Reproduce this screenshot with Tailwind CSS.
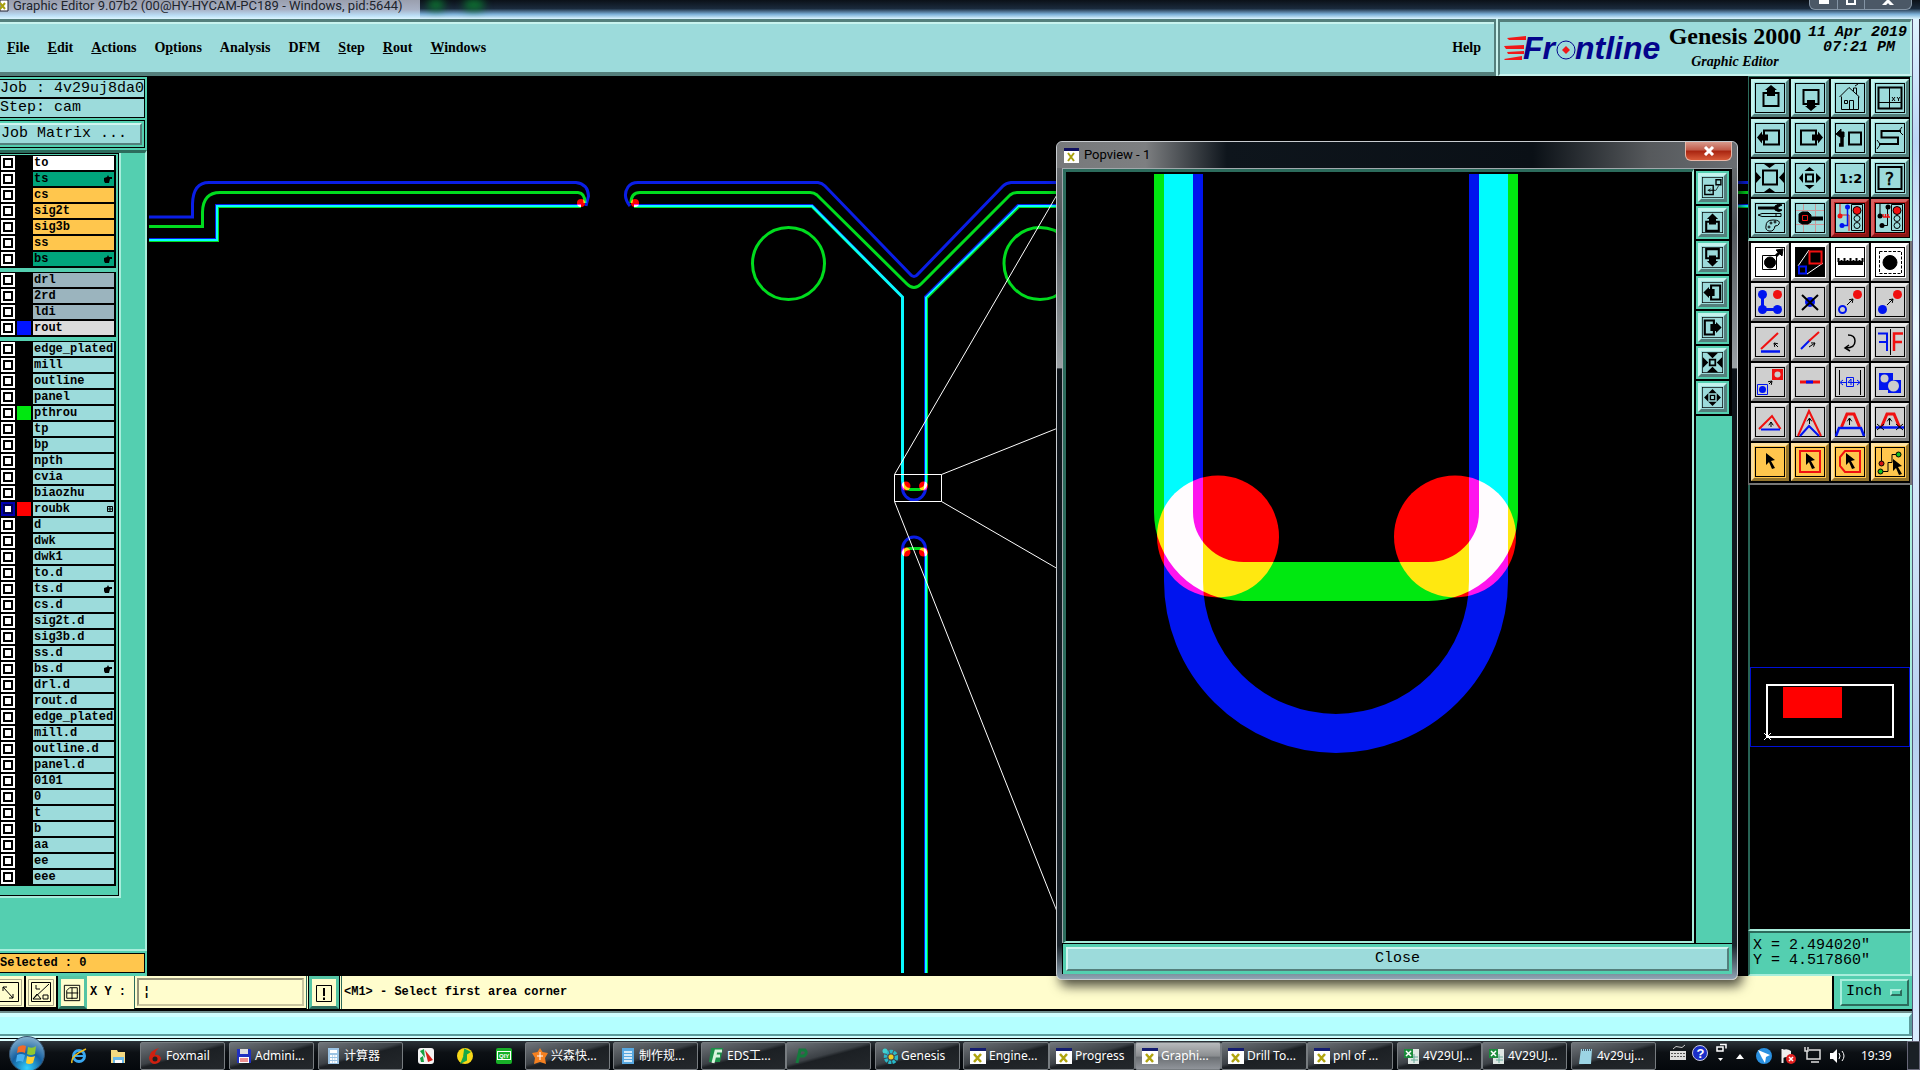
<!DOCTYPE html>
<html lang="en">
<head>
<meta charset="utf-8">
<title>Graphic Editor</title>
<script src="https://cdn.jsdelivr.net/npm/@tailwindcss/browser@4"></script>
</head>
<body class="bg-black">
<div class="relative flex h-screen flex-col overflow-hidden bg-black font-['Liberation_Mono',monospace] text-black">

  <!-- window title -->
  <header class="flex h-[19px] shrink-0 items-start justify-between">
    <div class="relative flex h-full flex-1 items-start bg-[linear-gradient(180deg,#0b1118_0%,#1a2a3c_45%,#7cb0d8_75%,#dcf6ff_100%)]">
      <div class="flex h-full w-[420px] items-start gap-1 bg-[linear-gradient(180deg,#9a9fae_0%,#a7b0c4_50%,#b9dcf4_80%,#dcf6ff_100%)]">
        <svg class="h-[12px] w-[9px]" viewBox="0 0 9 12"><path d="M0 0h8v11H0z" fill="#fff" stroke="#223"/><path d="M0 3l5 6M5 3L0 9" stroke="#a8a010" stroke-width="2"/></svg>
        <h1 class="font-[Roboto,sans-serif] text-[13px] leading-[11px] whitespace-nowrap text-[#20242c]">Graphic Editor 9.07b2 (00@HY-HYCAM-PC189 - Windows, pid:5644)</h1>
      </div>
      <span class="ml-2 h-[10px] w-4 rounded-full bg-[#0c7a30] blur-xs"></span><span class="ml-5 h-[10px] w-5 rounded-full bg-[#0c7a30] blur-xs"></span>
    </div>
    <div class="absolute top-0 right-2 flex h-[10px] rounded-b-md border border-t-0 border-[#8494a4] bg-[#4b5866]">
      <button aria-label="Minimize" class="flex w-[28px] items-start justify-center border-r border-[#8494a4]"><span class="h-[4px] w-[10px] bg-white"></span></button>
      <button aria-label="Maximize" class="flex w-[27px] items-start justify-center border-r border-[#8494a4]"><span class="h-[5px] w-[10px] border-2 border-t-0 border-white"></span></button>
      <button aria-label="Close window" class="flex w-[46px] items-start justify-center"><svg width="12" height="5" viewBox="0 0 12 5"><path d="M1 6l5-5 5 5" stroke="#fff" stroke-width="3" fill="none"/></svg></button>
    </div>
  </header>

  <div class="flex min-h-0 flex-1">
    <div class="flex min-w-0 flex-1 flex-col">
      <!-- menu bar and brand -->
      <div class="flex h-[57px] shrink-0 bg-[#9cdbdb] font-['Liberation_Serif',serif] text-[14px] font-bold">
        <nav class="flex flex-1 items-center border-t-[3px] border-r-2 border-b-4 border-t-[#547f7c] border-r-[#547f7c] border-b-[#547f7c] pr-[13px] pl-[7px] shadow-[inset_0_2px_0_#c8f3ee,2px_0_0_#c8f3ee]">
          <div class="flex gap-[18px]">
            <button><u>F</u>ile</button><button><u>E</u>dit</button><button><u>A</u>ctions</button><button>O<u>p</u>tions</button><button>Analysis</button><button>DFM</button><button><u>S</u>tep</button><button><u>R</u>out</button><button><u>W</u>indows</button>
          </div>
          <button class="ml-auto">Help</button>
        </nav>
        <div class="ml-[2px] flex w-[414px] items-start border-t-[3px] border-r-2 border-b-2 border-l-2 border-t-[#547f7c] border-r-[#c8f3ee] border-b-[#c8f3ee] border-l-[#547f7c] pl-[4px]">
          <svg class="mt-[8px] h-[40px] w-[162px] shrink-0" viewBox="0 -2 162 40" role="img" aria-label="Frontline">
            <path d="M3 6l19-2v4H5zM0 14l20-1v4H2zM3 20l17-1v3H4zM0 27l18-3v4H1z" fill="#f01818"/>
            <text x="19" y="27" font-family="Liberation Sans" font-size="32" font-weight="bold" font-style="italic" fill="#04048c">Fr</text>
            <circle cx="62" cy="18" r="9" fill="#9cdbdb" stroke="#04048c"/><path d="M62 14l4 4-4 4-4-4z" fill="#f01818"/>
            <text x="71" y="27" font-family="Liberation Sans" font-size="32" font-weight="bold" font-style="italic" fill="#04048c">ntline</text>
          </svg>
          <div class="flex w-[138px] flex-col items-center">
            <span class="text-[24px] leading-[28px] whitespace-nowrap">Genesis 2000</span>
            <span class="text-[14px] leading-[24px] italic">Graphic Editor</span>
          </div>
          <div class="mt-[3px] ml-[4px] text-right font-['Liberation_Mono',monospace] text-[15px] leading-[15px] whitespace-nowrap italic">
            <div>11 Apr 2019</div><div class="pr-[12px]">07:21 PM</div>
          </div>
        </div>
      </div>

      <main class="flex min-h-0 flex-1">
        <!-- layer panel -->
        <aside class="flex w-[147px] shrink-0 flex-col overflow-hidden border-t border-black bg-[#54cfb0] pb-[3px]">
          <div class="mt-[2px] mr-[2px] border border-l-0 border-black bg-[#9cdbdb] text-[15px] leading-[17px] whitespace-nowrap">Job : 4v29uj8da0</div>
          <div class="mr-[2px] border border-l-0 border-black bg-[#9cdbdb] text-[15px] leading-[18px] whitespace-nowrap">Step: cam</div>
          <div class="mt-[2px] mr-[2px] border border-l-0 border-black py-[2px] pr-[2px]">
            <button class="block h-[22px] w-full border-2 border-l-0 border-t-[#d0f5f0] border-r-[#547f7c] border-b-[#547f7c] bg-[#9cdbdb] pl-[1px] text-left text-[15px] leading-[18px]">Job Matrix ...</button>
          </div>
          <div class="mt-[2px] flex flex-1 flex-col border-t-[3px] border-r-2 border-b-2 border-t-[#2c6b5c] border-r-[#a8eedc] border-b-[#a8eedc]">
            <div class="w-[121px] border-r-2 border-b-2 border-[#a8eedc]">
              <div id="layers" class="flex flex-col gap-[4px] border-t border-r border-b border-black pt-[1px] pr-[2px] pb-[9px]"></div>
            </div>
          </div>
          <div class="mt-[2px] mr-[2px] h-[20px] border border-l-0 border-black bg-[#ffc64d] text-[12px] leading-[18px] font-bold">Selected : 0</div>
        </aside>

        <!-- drawing -->
        <section class="relative min-w-0 flex-1 bg-black" aria-label="Drawing">
          <svg class="absolute inset-0 isolate h-full w-full" fill="none">
            <g transform="translate(-147 -76)">
              <g class="mix-blend-plus-lighter" stroke="#00dc1e" stroke-width="3">
                <path d="M149 226.500H202.500V212Q203 192.500 220 192.500H578Q585 193 585 203"/>
                <path d="M631 203Q631 192.500 640 192.500H810Q814 192.500 817 195L907 284Q914 291 921 284L1010 195Q1013 192.500 1017 192.500H1748"/>
                <path d="M149 240.500H217.500V206.500H581M634 206.500H812L902.500 297V480Q903 489.500 910 489.500H920Q926.500 489 926.500 480V298L1019 206.500H1748"/>
                <path d="M902.500 973V556Q903 548.500 910 548.500H920Q926.500 549 926.500 556V973"/>
                <circle cx="788.500" cy="263.500" r="36"/><circle cx="1040" cy="263.500" r="36"/>
              </g>
              <g class="mix-blend-plus-lighter" stroke="#0a1ee6" stroke-width="3">
                <path d="M149 217H192.500V204Q193 182.500 209 182.500H576Q588 184 588.500 196L586 206"/>
                <path d="M630 206Q622 196 628 187Q631 182.500 638 182.500H818Q822 183 825 186L910 274Q914 279 918 274L1003 186Q1006 183 1011 182.500H1748"/>
                <path d="M149 239.500H216.500V205.500H581M634 205.500H812L902.500 297V488A11.500 12 0 0 0 925.500 488V297L1018 205.500H1748"/>
                <path d="M902.500 973V549A11.500 12 0 0 1 925.500 549V973"/>
              </g>
              <g class="mix-blend-plus-lighter" fill="#f00">
                <circle cx="581" cy="203" r="4"/><circle cx="635" cy="203" r="4"/><circle cx="906" cy="486" r="4.500"/><circle cx="923.500" cy="486" r="4.500"/><circle cx="906" cy="552" r="4.500"/><circle cx="923.500" cy="552" r="4.500"/>
              </g>
              <g stroke="#fff"><path d="M894.500 474.500H941.500V501.500H894.500ZM894.500 474.500L1058 193M941.500 474.500L1058 428M941.500 501.500L1058 569M894.500 501.500L1058 914"/></g>
            </g>
          </svg>
        </section>

        <!-- tool column -->
        <aside class="flex w-[164px] shrink-0 flex-col">
          <div id="viewTools" class="grid grid-cols-[repeat(4,38px)] gap-[2px] border-t border-r-2 border-b-[3px] border-l border-t-[#2c6b5c] border-r-[#a8eedc] border-b-[#a8eedc] border-l-[#2c6b5c] bg-black p-[2px] pb-[1px]"></div>
          <div id="editTools" class="grid grid-cols-[repeat(4,38px)] gap-[2px] border-r-2 border-b-2 border-l border-[#777] bg-black p-[2px]"></div>
          <div class="relative flex flex-1 flex-col border-r-2 border-b-2 border-l-2 border-r-[#a8eedc] border-b-[#a8eedc] border-l-[#2c6b5c] bg-black pt-[182px]">
            <svg class="h-[80px] w-full" viewBox="0 0 160 80" fill="none"><rect x=".5" y=".5" width="159" height="79" stroke="#0010d8"/><rect x="17" y="18" width="126" height="52" stroke="#fff" stroke-width="2"/><path d="M33 20H92V51H33z" fill="#f00"/><path d="M14 66l7 7M21 66l-7 7" stroke="#fff"/></svg>
          </div>
          <div class="h-[45px] border-t-2 border-r-2 border-b-2 border-l-2 border-t-[#2c6b5c] border-r-[#a8eedc] border-b-[#a8eedc] border-l-[#2c6b5c] bg-[#54cfb0] pt-[5px] pl-[3px] text-[15px] leading-[15px] whitespace-nowrap"><div>X = 2.494020"</div><div>Y = 4.517860"</div></div>
        </aside>
      </main>

      <!-- command line -->
      <div class="flex h-[33px] shrink-0 bg-[#fffdcd] text-[12px] font-bold">
        <button aria-label="Resize" class="w-[26px] border-r-2 border-b-2 border-black"><svg class="h-[30px] w-[24px]" viewBox="0 0 24 30" fill="none" stroke="#000"><path d="M-1 2.500h22.500v26H-1" stroke="#aaa78a"/><path d="M-1 5.500h19.500v19H-1M3 10l10 11M3 10v4M3 10h4M13 21v-4M13 21h-4"/></svg></button>
        <button aria-label="Angle snap" class="w-[32px] border-r-2 border-b-2 border-black"><svg class="h-[30px] w-[30px]" viewBox="0 0 30 30" fill="none" stroke="#000"><path d="M2.500 2.500h25v26h-25z" stroke="#aaa78a"/><path d="M5.500 5.500h19v19h-19zM7 22L23 7M7 22h8l-4-5z"/><path d="M10 8v4h4M17 18h5v4h-5z"/></svg></button>
        <button aria-label="Grid" class="w-[29px] border-[3px] border-[#54c4a4] border-b-[#2c6b5c]"><svg class="size-[23px]" viewBox="0 0 24 24" fill="none" stroke="#000"><path d="M3.500 4.500h16v16h-16zM6 12.500h12M11.500 7v12M6 10l3-3h8v11H6z"/></svg></button>
        <label for="xy" class="w-[47px] pl-[3px] leading-[32px] whitespace-pre">X Y :</label>
        <div class="w-[173px] border-x border-b border-x-[#2c6b5c] border-b-black p-[2px]"><input id="xy" class="block h-[28px] w-full border-2 border-t-[#98957a] border-r-[#c9c6a0] border-b-[#c9c6a0] border-l-[#98957a] bg-[#fffdcd] px-1 outline-none placeholder:text-black" placeholder="¦"></div>
        <button aria-label="Messages" class="ml-[2px] w-[30px] border-[3px] border-[#54c4a4] border-b-[#2c6b5c] outline outline-black"><svg class="size-[24px]" viewBox="0 0 24 24" fill="none" stroke="#000"><path d="M4.500 4.500h15v16h-15z"/><path d="M12 7v8M12 16.500v2.500" stroke-width="2"/></svg></button>
        <output class="ml-[2px] flex-1 border-l border-[#2c6b5c] pl-[2px] leading-[32px]">&lt;M1&gt; - Select first area corner</output>
        <div class="w-[80px] border-l-2 border-black bg-[#54cfb0] py-[3px] pr-[3px] pl-[6px]">
          <label class="relative block"><span class="sr-only">Units</span>
            <select class="block h-[27px] w-full appearance-none border-2 border-t-[#a8eedc] border-r-[#2c6b5c] border-b-[#2c6b5c] border-l-[#a8eedc] bg-[#54cfb0] pl-[4px] text-[15px] font-normal"><option>Inch</option><option>mm</option></select>
            <span class="absolute top-[10px] right-[7px] h-[7px] w-[12px] border-2 border-t-[#a8eedc] border-r-[#2c6b5c] border-b-[#2c6b5c] border-l-[#a8eedc]"></span></label>
        </div>
      </div>
      <div class="h-[32px] shrink-0 border-t-2 border-b-2 border-t-black border-b-[#dff]">
        <div class="h-full border-t-2 border-b border-t-[#6e8c8a] border-b-black"><div class="h-[23px] border-t-4 border-r-[3px] border-b-2 border-t-[#d0ffff] border-r-[#5c9c9c] border-b-[#5c9c9c] bg-[#b4ffff]"></div><div class="h-[2px] bg-[#d0ffff]"></div></div>
      </div>
    </div>
    <div class="w-2 shrink-0 border-r border-l border-r-[#334] border-l-[#557] bg-[linear-gradient(180deg,#dff3ff_0%,#bcd6f6_12%,#eaf8ff_30%,#b6d0f0_70%,#d9ecff_100%)]"></div>
  </div>

  <!-- taskbar -->
  <footer class="flex h-[29px] shrink-0 items-center bg-[linear-gradient(180deg,#2c3238_0%,#0c1014_40%,#04080c_100%)] font-['Noto_Sans','Noto_Sans_CJK_SC',sans-serif] text-[12px] text-white">
    <button aria-label="Start" class="ml-[8px] w-[38px] self-end"><svg class="block h-[34px] w-[38px]" viewBox="0 0 38 34"><defs><radialGradient id="orb" cx=".5" cy=".9" r=".9"><stop offset="0" stop-color="#30d0ff"/><stop offset=".5" stop-color="#1560a0"/><stop offset="1" stop-color="#8ab4d0"/></radialGradient></defs><circle cx="19" cy="18" r="17.500" fill="url(#orb)" stroke="#37536e"/><path d="M10 11q4-3 8-1l-1 7q-4-2-8 0z" fill="#f06a28"/><path d="M20 11q5 2 8-1l-1 8q-4 2-8 0z" fill="#90c830"/><path d="M9 19q4-2 8 0l-2 7q-3-2-7 0z" fill="#48b0f0"/><path d="M19 20q4 2 8 0l-2 7q-4 2-7 0z" fill="#ffd030"/></svg></button>
    <div id="tasks" class="flex h-[28px] flex-1 items-center"></div>
    <div class="flex h-full items-center">
      <svg class="h-[28px] w-[198px]" viewBox="0 0 198 28" fill="none">
        <path d="M10 7q3-4 6-2t6-2" stroke="#ccc"/><path d="M7 9h16v9H7z" fill="#ddd"/><path d="M8 11.500h14M8 14.500h14" stroke="#555" stroke-dasharray="2 1"/>
        <circle cx="37" cy="11" r="7.500" fill="#1a2ec8" stroke="#ccd"/><text x="33.500" y="16" font-family="Liberation Sans" font-weight="bold" font-size="13" fill="#fff">?</text>
        <path d="M54 5h6v4h-6zM57 2.500h6v4" stroke="#fff" stroke-width="1.500"/><path d="M55 16h5l-2.500 3z" fill="#fff"/><path d="M73 17h8l-4-5z" fill="#fff"/>
        <circle cx="101" cy="14" r="8" fill="#2a90e0"/><path d="M95 8l12 5-4 2-1 6-3-5z" fill="#fff"/>
        <path d="M119.500 7v14" stroke="#eee" stroke-width="2"/><path d="M120 8q4-2 8 1v7q-4-2-8 0z" fill="#eee"/><circle cx="128" cy="17" r="5" fill="#e02020"/><path d="M126 15l4 4M130 15l-4 4" stroke="#fff" stroke-width="1.500"/>
        <path d="M146 8h11v9h-13v-8M148 20h8M142 5v4h3v-4" stroke="#ddd" stroke-width="1.500"/>
        <path d="M167 11h3l4-4v14l-4-4h-3z" fill="#fff"/><path d="M176 11q2 3 0 6M179 9q4 5 0 10" stroke="#fff"/>
      </svg>
      <time class="w-[46px] whitespace-nowrap">19:39</time>
      <button aria-label="Show desktop" class="h-full w-[13px] border border-[#667] bg-[#1a2026]"></button>
    </div>
  </footer>

  <!-- zoomed view window -->
  <section class="absolute top-[141px] left-[1056px] flex h-[839px] w-[682px] flex-col rounded-t-md rounded-b-md border border-[#c8ccd0] bg-[linear-gradient(180deg,#6e7276_0%,#50565a_10%,#9aa0a4_27%,#0c1218_27.100%,#1a242c_96%,#8fa4b4_100%)] px-[5px] pb-[5px] shadow-[4px_6px_12px_rgba(0,0,0,0.7)]" aria-label="Popview">
    <div class="-mx-[5px] flex h-[26px] shrink-0 items-center rounded-t-md bg-[linear-gradient(90deg,#77797b_0%,#7d7f81_13%,#0e151c_25%,#0a1016_70%,#56595c_87%,#6a6e72_100%)] pr-[5px] pl-[7px]">
      <svg class="mr-[5px] h-[15px] w-[15px]" viewBox="0 0 15 15"><path d="M0 0h15v15H0z" fill="#fff"/><path d="M0 0h15v3H0z" fill="#101060"/><path d="M4 5l6 8M10 5l-6 8" stroke="#a8a010" stroke-width="2"/></svg>
      <h2 class="font-[Roboto,sans-serif] text-[13px] text-black">Popview - 1</h2>
      <button aria-label="Close popview" class="mb-auto ml-auto flex h-[19px] w-[47px] items-center justify-center rounded-b-md border border-t-0 border-[#e8b8a8] bg-[linear-gradient(180deg,#d89a8c_0%,#c05a48_45%,#a82410_50%,#d85a38_100%)]"><svg width="12" height="10" viewBox="0 0 12 10"><path d="M2 1l8 8M10 1l-8 8" stroke="#fff" stroke-width="3"/></svg></button>
    </div>
    <div class="flex min-h-0 flex-1 border-t border-l border-[#a0a8ac] bg-black">
      <div class="relative flex-1 border-t-[3px] border-r-2 border-b-2 border-l-[3px] border-t-[#2c6b5c] border-r-[#a8eedc] border-b-[#a8eedc] border-l-[#2c6b5c] bg-black">
        <svg class="absolute inset-0 isolate h-full w-full" fill="none">
          <g transform="translate(-1066 -172)">
            <path class="mix-blend-plus-lighter" d="M1173.500 174V512A70 69.500 0 0 0 1243.500 581.500H1428.500A70 69.500 0 0 0 1498.500 512V174" stroke="#00e810" stroke-width="39"/>
            <path class="mix-blend-plus-lighter" d="M1183.500 174V581A152.500 152.500 0 0 0 1488.500 581V174" stroke="#0014ee" stroke-width="39"/>
            <g class="mix-blend-plus-lighter" fill="#f00"><circle cx="1218" cy="536.500" r="61"/><circle cx="1455" cy="536.500" r="61"/></g>
          </g>
        </svg>
      </div>
      <div class="flex w-[38px] flex-col border-l-2 border-black bg-[#54cfb0]"><div id="popTools" class="flex flex-col gap-[2px] bg-black py-[2px] pr-[3px]"></div></div>
    </div>
    <div class="shrink-0 border-t border-l border-black bg-[#54cfb0] p-[3px]"><button class="block h-[24px] w-full border-2 border-t-[#d0f5f0] border-r-[#547f7c] border-b-[#547f7c] border-l-[#d0f5f0] bg-[#9cdbdb] text-[15px] leading-[20px]">Close</button></div>
  </section>
</div>

<script>
// ---- layers: name, row colour, swatch, marker ----
const P = 'bg-[#9cdbdb]', O = 'bg-[#ffc64d]', G = 'bg-[#00a47c]', S = 'bg-[#9bb4be]';
const groups = [
  [['to','bg-white'],['ts',G,,'hand'],['cs',O],['sig2t',O],['sig3b',O],['ss',O],['bs',G,,'hand']],
  [['drl',S],['2rd',S],['ldi',S],['rout','bg-[#dcdcdc]','bg-[#0014ff]']],
  ['edge_plated','mill','outline','panel','pthrou','tp','bp','npth','cvia','biaozhu','roubk','d','dwk','dwk1','to.d','ts.d','cs.d','sig2t.d','sig3b.d','ss.d','bs.d','drl.d','rout.d','edge_plated','mill.d','outline.d','panel.d','0101','0','t','b','aa','ee','eee']
    .map(n => [n, P, {pthrou:'bg-[#00e810]', roubk:'bg-[#ff0000]'}[n], {roubk:'grid','ts.d':'hand','bs.d':'hand'}[n]])
];
const marks = {
  hand: '<svg class="mr-[2px] size-[8px]" viewBox="0 0 8 8"><path d="M0 3l3-1 1-2 1 2h3v2H6l-1 4H1L0 6z"/></svg>',
  grid: '<svg class="mr-[1px] size-[6px]" viewBox="0 0 6 6" fill="none" stroke="#000"><path d="M.5.5h5v5h-5zM3 0v6M0 3h6"/></svg>'
};
let n = 0;
document.getElementById('layers').innerHTML = groups.map(g => '<div class="flex flex-col gap-[2px] bg-black pt-[1px] pb-[2px] pl-[1px]">' + g.map(([name, bg, sw, m]) => {
  const id = 'layer' + (n++);
  const box = name === 'roubk' ? 'shadow-[inset_0_0_0_2px_#0000b0,inset_0_0_0_4px_#000050]' : 'shadow-[inset_0_0_0_2px_#fff,inset_0_0_0_4px_#000]';
  return `<div class="flex h-[14px] gap-[2px]"><input type="checkbox" id="${id}" class="size-[14px] shrink-0 appearance-none bg-white ${box}"><span class="w-[14px] shrink-0 ${sw || 'bg-black'}"></span><label for="${id}" class="flex w-[81px] items-center justify-between pl-[1px] text-[12px] leading-[14px] font-bold whitespace-nowrap ${bg}"><span>${name}</span>${m ? marks[m] : ''}</label></div>`;
}).join('') + '</div>').join('');

// ---- tool icons, 30 x 30 ----
const arr = (x1, y1, x2, y2) => { const a = Math.atan2(y2 - y1, x2 - x1), p = t => `${x2 - 4 * Math.cos(a + t)} ${y2 - 4 * Math.sin(a + t)}`; return `<path d="M${x1} ${y1}L${x2} ${y2}M${p(.6)}L${x2} ${y2}L${p(-.6)}"/>`; };
const R = '#f01010', B = '#0014f0';
const dot = (x, y, r, f) => `<circle cx="${x}" cy="${y}" r="${r}" fill="${f}" stroke="none"/>`;
const cursor = (x = 0, y = 0) => `<path transform="translate(${x} ${y})" d="M11 6l9 7-4 1 4 7-3 1-3-7-3 3z" fill="#000" stroke="none"/>`;
const lights = '<path d="M16.500 1.500h11v26h-11z"/><circle cx="22" cy="7.500" r="4" fill="#f01010"/><circle cx="22" cy="15.500" r="3"/><circle cx="22" cy="22.500" r="3"/>';
const I = {
  up: '<path d="M8.500 10h15v13h-15z" stroke-width="2"/><path d="M16 2l6 5h-2v6h-8V7h-2z" fill="#000" stroke="none"/>',
  down: '<path d="M8.500 7h15v14h-15z" stroke-width="2"/><path d="M16 28l6-5h-2v-6h-8v6h-2z" fill="#000" stroke="none"/>',
  left: '<path d="M9 7.500h15v14H9z" stroke-width="2"/><path d="M2 14.500l5-6v3h6v6H7v3z" fill="#000" stroke="none"/>',
  right: '<path d="M6 7.500h15v14H6z" stroke-width="2"/><path d="M28 14.500l-5-6v3h-6v6h6v3z" fill="#000" stroke="none"/>',
  home: '<path d="M4.500 14L14 4.500 24.500 14M6.500 13.500v13h17v-13M14.500 26.500v-9h4v9M9.500 17.500h3v3h-3zM18.500 8V5h3v6M20 3l3-2"/>',
  xy: '<path d="M3.500 4.500h23v21h-23z" stroke-width="2"/><path d="M14.500 5v20M4 19.500h22M17 14l3 4M20 14l-3 4M22 14l1.500 2 1.500-2M23.500 16v2"/>',
  back: '<path d="M14 9.500h12v12H14z" stroke-width="2"/><path d="M4 22h3V12" stroke-width="3.500"/><path d="M1 11l5-5v3h3v5H5z" fill="#000"/>',
  snake: '<path d="M26 8H6.500v6.500H23V21H4" stroke-width="2"/><path d="M24 8l3-4M25 9l3 3M5 21l-3-4M5 22l-3 4"/>',
  fit: '<path d="M8 7.500h14v14H8z" stroke-width="2"/><path d="M9 1h11l-5.500 4zM9 29h11l-5.500-4zM1 9v11l5-5.500zM29 9v11l-5-5.500z" fill="#000" stroke="none"/>',
  out: '<path d="M11 11.500h7v7h-7z" stroke-width="2"/><path d="M9.500 8h10l-5-4zM9.500 22h10l-5 4zM8 10v10l-4-5zM21 10v10l5-5z" fill="#000" stroke="none"/>',
  ratio: '<text x="4" y="20" font-family="DejaVu Sans" font-size="13" font-weight="bold" fill="#000" stroke="none">1:2</text>',
  help: '<path d="M3.500 4h23v22h-23z" stroke-width="2"/><text x="10" y="22" font-family="DejaVu Sans" font-size="17" fill="#000" stroke="#000" stroke-width=".5">?</text>',
  tools: '<path d="M3 5h17" stroke-width="3"/><path d="M27 2q-4-2-7 1v4q4 3 7 0l-4-1V4z" fill="#000"/><path d="M3 12l4-1.500h19v3H7zM21 10v4"/><path d="M11 23q0-6 7-6 8 0 6 4-1 2-4 2-1 6-6 5-4-1-3-5z"/><circle cx="16" cy="20" r="1"/><circle cx="20" cy="19" r="1"/><circle cx="14" cy="24" r="1"/>',
  probe: '<path d="M8.500 1v28M20.500 1v28M1 7.500h28M1 21.500h28" stroke="#c99"/><path d="M14 15.500h14" stroke-width="4"/><path d="M4 11l3-2h6l3 3v7l-3 2H7l-3-2z" fill="#000"/><path d="M7.500 12.500h5v5h-5z" stroke="#f01010"/>',
  net1: '<path d="M5 1v11h9v16" stroke="#f01010"/><path d="M12.500 4v18.500H6" stroke="#0014f0" stroke-width="1.500"/>' + dot(5, 13, 2.5, R) + dot(12.5, 4, 2.5, B) + dot(7, 22.5, 2.5, B) + lights,
  net2: '<path d="M5 1v11M12.500 4v18.500H6"/><path d="M8 14h7M8 11v3M10.500 11v3M13 11v3" stroke="#f01010" stroke-width="1.500"/>' + dot(5, 13, 2.5, '#000') + dot(13, 4, 2.5, '#000') + dot(7, 22.5, 2.5, '#000') + lights,
  pad: '<path d="M7.500 8.500h14v14h-14z"/><circle cx="15" cy="15.500" r="5.500" fill="#000"/><path d="M21 9l5-5" stroke-width="3"/><path d="M21 3l7-1-1 7z" fill="#000"/>',
  scale: '<path d="M1 1h28v28H1z" fill="#000"/><path d="M14 3L3 19M28 16L12 27" stroke="#fff"/><path d="M14.500 4.500h12v12h-12z" stroke="#f01010" stroke-width="2"/><path d="M4 19.500h7v7H4z" stroke="#0014f0" stroke-width="2"/>',
  ruler: '<path d="M3 14h25v4H3z" fill="#000" stroke="none"/><path d="M3.500 11v4M6.500 13v4M9.500 11v4M12.500 13v4M15.500 11v4M18.500 13v4M21.500 11v4M24.500 13v4M27.500 11v4" stroke-width="2"/>',
  area: '<path d="M4.500 4.500h22v22h-22z" stroke-dasharray="3 1.500"/><circle cx="15" cy="15.500" r="7" fill="#000"/>',
  chain: '<path d="M7.500 7.500v15h15" stroke="#0014f0" stroke-width="3"/>' + dot(7.5, 7.5, 4.5, B) + dot(7.5, 22.5, 4.5, B) + dot(22.5, 22.5, 4.5, B) + dot(22.5, 7.5, 4.5, R),
  del: dot(15, 15, 5, B) + '<path d="M7 8l16 15M23 8L7 23" stroke-width="2"/>',
  move: '<circle cx="7.500" cy="22.500" r="3.500" stroke="#0014f0" stroke-width="2"/>' + dot(22.5, 7.5, 4.5, R) + arr(12, 18, 18, 12),
  copy: dot(7.5, 22.5, 4.5, B) + dot(22.5, 7.5, 4.5, R) + arr(12, 18, 18, 12),
  angle: '<path d="M6 22L23 6" stroke="#f01010" stroke-width="2"/><path d="M6 24.500h19" stroke="#0014f0" stroke-width="2.500"/>' + arr(23, 20, 19, 16),
  line: '<path d="M6 22l9-9" stroke="#0014f0" stroke-width="2"/><path d="M14 14l10-9" stroke="#f01010" stroke-width="2"/>' + arr(14, 20, 20, 16),
  rot: '<path d="M13 8q7 0 7 6 0 7-9 7M14 18l-4 3 5 3" stroke-width="1.500"/>',
  mirror: '<path d="M3 6.500h9V24M4 15h8" stroke="#0014f0" stroke-width="2"/><path d="M15.500 2v26"/><path d="M28 6.500h-9V24M27 15h-8" stroke="#f01010" stroke-width="2.500"/>',
  swap: '<path d="M17 2h11v11H17z" fill="#f01010" stroke="none"/>' + dot(22.5, 7.5, 3, '#ccc') + '<path d="M2.500 17.500h10v10h-10z" stroke="#0014f0"/>' + dot(7.5, 22.5, 3.5, B) + arr(14, 17, 17, 14),
  seg: '<path d="M5 15h20" stroke="#f01010" stroke-width="3"/><path d="M11 15h7" stroke="#0014f0" stroke-width="3"/>',
  gap: '<path d="M4.500 3v25M25.500 3v25"/><g stroke="#0014f0"><path d="M6 15.500h6M19 15.500h6M8 13l-3 2.500 3 2.500M22 13l3 2.500-3 2.500M11.500 10.500h7v9h-7zM16 18v-6l-3 3.500h5"/></g>',
  shapes: '<path d="M4 6h14v7h8v13H13v-3H4z" fill="#0014f0" stroke="none"/>' + dot(9.5, 11.5, 4, '#ccc') + dot(18.5, 19, 5.5, '#ccc'),
  t1: '<path d="M4 22L17 9l8.500 13" stroke="#f01010" stroke-width="2"/><path d="M6 22.500h19" stroke="#0014f0" stroke-width="2"/>' + arr(16, 20, 16, 15),
  t2: '<path d="M3 29L14 4l12 25" stroke="#f01010" stroke-width="2"/><path d="M5 29l9-10 10 10" stroke="#0014f0" stroke-width="2"/>' + arr(14.5, 17, 14.5, 11),
  t3: '<path d="M6.500 20L12 7h7l5.500 13" stroke="#f01010" stroke-width="3"/><path d="M1 29l3-8h22l3 8" stroke="#0014f0" stroke-width="2.500"/>' + arr(14.5, 18, 14.5, 11),
  t4: '<path d="M6.500 20L12 7h7l5.500 13" stroke="#f01010" stroke-width="3"/><path d="M1 20.500h28" stroke="#0014f0" stroke-width="2.500"/><path d="M2 17l7 6M9 17l-7 6M21 17l7 6M28 17l-7 6"/>' + arr(14.5, 18, 14.5, 11),
  sel: cursor(),
  selbox: '<path d="M5 4h20v21H5z" stroke="#f01010" stroke-width="2"/>' + cursor(),
  selpoly: '<path d="M10 4h15v21H10l-5-6v-9z" stroke="#f01010" stroke-width="2"/>' + cursor(),
  selnet: '<path d="M6.500 1v15M5 24.500h8v-9h4v-8h6"/><circle cx="6.500" cy="16.500" r="2.500" fill="#d01010"/><circle cx="5.500" cy="24.500" r="2.500" fill="#10c020"/><circle cx="23.500" cy="7.500" r="2.500" fill="#10c020"/>' + cursor(7, 6),
  pop: '<path d="M4 12h12v13H4zM20 4h7v7h-7z" stroke-width="2"/><path d="M8 19h12l4-7"/>' + arr(18, 19, 9, 19),
  // bolder drawings for the narrow popview column
  pUp: '<path d="M6 14h18v13H6z" stroke-width="3"/><path d="M15 2l8 8h-3v8H10v-8H7z" fill="#000" stroke="none"/>',
  pDown: '<path d="M6 3h18v13H6z" stroke-width="3"/><path d="M15 28l8-8h-3v-8H10v8H7z" fill="#000" stroke="none"/>',
  pLeft: '<path d="M13 5h13v20H13z" stroke-width="3"/><path d="M2 15l8-8v3h8v10h-8v3z" fill="#000" stroke="none"/>',
  pRight: '<path d="M4 5h13v20H4z" stroke-width="3"/><path d="M28 15l-8-8v3h-8v10h8v3z" fill="#000" stroke="none"/>',
  pFit: '<path d="M11 11h8v8h-8z" stroke-width="2.500"/><path d="M7 1h16l-8 8zM7 29h16l-8-8zM1 7v16l8-8zM29 7v16l-8-8z" fill="#000" stroke="none"/>',
  pOut: '<path d="M12 12h6v6h-6z" stroke-width="2"/><path d="M9 9h12l-6-6zM9 21h12l-6 6zM9 9v12l-6-6zM21 9v12l6-6z" fill="#000" stroke="none"/>'
};
const pale = 'border-t-[#c4f3ee] border-l-[#c4f3ee] border-r-[#547f7c] border-b-[#547f7c] bg-[#9cdbdb]';
const red = 'border-t-[#d86060] border-l-[#d86060] border-r-[#8a1414] border-b-[#8a1414] bg-[#9cdbdb] shadow-[inset_0_0_0_1px_#b42020]';
const white = 'border-t-white border-l-white border-r-[#999] border-b-[#999] bg-white';
const gray = 'border-t-[#e8e8e8] border-l-[#e8e8e8] border-r-[#808080] border-b-[#808080] bg-[#cfcfcf]';
const amber = 'border-t-[#ffe2a0] border-l-[#ffe2a0] border-r-[#94742c] border-b-[#94742c] bg-[#ffc64d]';
const svg = (k, cls) => `<svg class="${cls}" viewBox="0 0 30 30" fill="none" stroke="#000"><rect x=".5" y=".5" width="29" height="29"/>${I[k]}</svg>`;
const tool = (k, skin) => `<button aria-label="${k}" class="flex size-[38px] items-center justify-center border-[3px] ${skin}">${svg(k, 'size-[30px] shrink-0')}</button>`;
document.getElementById('viewTools').innerHTML = 'up down home xy left right back snake fit out ratio help tools probe net1 net2'.split(' ').map((k, i) => tool(k, i > 13 ? red : pale)).join('');
document.getElementById('editTools').innerHTML = 'pad scale ruler area chain del move copy angle line rot mirror swap seg gap shapes t1 t2 t3 t4 sel selbox selpoly selnet'.split(' ').map((k, i) => tool(k, i < 4 ? white : i > 19 ? amber : gray)).join('');
document.getElementById('popTools').innerHTML = 'pop pUp pDown pLeft pRight pFit pOut'.split(' ').map(k => `<div class="h-[33px] border-2 border-[#54cfb0]"><button aria-label="${k} view" class="flex h-full w-full items-center justify-center border-[3px] ${pale}">${svg(k, 'size-[21px] shrink-0')}</button></div>`).join('');

// ---- taskbar ----
const X = '<path d="M0 0h16v16H0z" fill="#fff"/><path d="M0 0h16v3H0z" fill="#141c70"/><path d="M4 6l7 8M11 6l-7 8" stroke="#b0a410" stroke-width="2.500"/>';
const XL = '<path d="M4 1h11v15H4z" fill="#dfe8e4"/><path d="M7 9h7M7 12h7M10 6v9" stroke="#6a9"/><path d="M0 1h9v9H0z" fill="#1c8c3c"/><path d="M2 3l5 5M7 3L2 8" stroke="#fff" stroke-width="1.500"/>';
const T = {
  ie: '<circle cx="8" cy="8" r="5.500" fill="none" stroke="#3aa8f0" stroke-width="3"/><path d="M3 8h10" stroke="#3aa8f0" stroke-width="2"/><path d="M1 15Q-1 8 15 1" fill="none" stroke="#f0c020" stroke-width="1.500"/>',
  dir: '<path d="M1 2h6l1 2h7v11H1z" fill="#f4d880"/><path d="M3 9h11v6H3z" fill="#6ab8e8"/><path d="M5 12h7v3H5z" fill="#fff"/>',
  fox: '<path d="M12 0Q3 2 2 10q1 6 6 6 6-1 6-6-2-4-6-3Q8 3 12 0z" fill="#d02010"/><circle cx="8" cy="11" r="2.500" fill="#222"/>',
  disk: '<path d="M1 1h13l1 1v13H1z" fill="#2030c0"/><path d="M4 1h8v5H4z" fill="#ddd"/><path d="M3 9h10v6H3z" fill="#fff"/><path d="M4 11h8M4 13h8" stroke="#d22"/>',
  calc: '<path d="M3 0h11v16H3z" fill="#9cc4e4"/><path d="M5 2h7v3H5z" fill="#fff"/><path d="M5 8h7M5 11h7M5 14h7" stroke="#fff" stroke-width="2" stroke-dasharray="2 .6"/>',
  cam: '<rect width="16" height="16" rx="3" fill="#f4f4f4"/><path d="M2 3l4-2 1 9z" fill="#18a040"/><path d="M2 10l3-2 1 6H3z" fill="#18a040"/><path d="M7 2l8 10-5 2z" fill="#d82018"/>',
  qqm: '<circle cx="8" cy="8" r="8" fill="#f8d818"/><path d="M8 2l4 2-3 2v6l-4 2 2-5z" fill="#18a848" stroke="#18a848" stroke-width="2"/>',
  iqy: '<rect width="16" height="16" rx="2" fill="#18b028"/><rect x="1.500" y="3.500" width="13" height="8" fill="none" stroke="#fff"/><text x="3" y="10" font-family="Liberation Sans" font-size="6" font-weight="bold" fill="#fff">QIY</text>',
  star: '<path d="M8 0l2.500 4 5.500 1-3 5 1 6-6-2-6 2 1-6-3-5 5.500-1z" fill="#f48020"/><path d="M8 4v8M5 8h6" stroke="#fff"/>',
  doc: '<path d="M2 0h12v16H2z" fill="#58a8e0"/><path d="M4 4h8M4 7h8M4 10h8M4 13h8" stroke="#fff" stroke-width="1.500"/>',
  F: '<path d="M3 0h12l-3 14H1z" fill="#1c9048"/><path d="M5 15L8 3h6M7 8h5" fill="none" stroke="#d8f4dc" stroke-width="3"/>',
  Pp: '<path d="M4 15L7 2h5q3 3-1 6H6" fill="none" stroke="#147a3c" stroke-width="3"/>',
  gen: '<circle cx="9" cy="9" r="5.500" fill="none" stroke="#28b8c8" stroke-width="3.500" stroke-dasharray="3 1"/><circle cx="9" cy="9" r="2.500" fill="#f0d020"/><circle cx="3" cy="3" r="2.500" fill="#40d0d0"/>',
  x: X, xl: XL,
  note: '<path d="M3 1h11l-1 15H1z" fill="#9cd4e4"/><path d="M4 2h10" stroke="#456" stroke-width="2" stroke-dasharray="1 1"/>'
};
const ic = k => `<svg class="size-[16px] shrink-0" viewBox="0 0 16 16">${T[k]}</svg>`;
const items = [
  ['ie'],['dir'],
  [['fox','Foxmail']],[['disk','Admini...']],[['calc','计算器']],
  ['cam'],['qqm'],['iqy'],
  [['star','兴森快...']],[['doc','制作规...']],[['F','EDS工...'],['Pp','']],[['gen','Genesis']],
  [['x','Engine...'],['x','Progress'],['x','Graphi...',1],['x','Drill To...'],['x','pnl of ...']],
  [['xl','4V29UJ...'],['xl','4V29UJ...']],[['note','4v29uj...']]
];
const fill = 'bg-[linear-gradient(165deg,#70757a_0%,#3c4146_45%,#1c2024_52%,#24282c_100%)]', lit = 'bg-[linear-gradient(180deg,#b8babc_0%,#8a8d90_50%,#6c7074_55%,#90949a_100%)]';
document.getElementById('tasks').innerHTML = items.map(it => typeof it[0] === 'string'
  ? `<button aria-label="${it[0]}" class="flex w-[39px] justify-center ${it[0] === 'ie' ? 'ml-[13px]' : it[0] === 'cam' ? '-ml-[1px]' : ''}">${ic(it[0])}</button>`
  : `<div class="flex h-[28px] ${['star', 'doc', 'gen'].includes(it[0][0]) ? 'mr-[3px]' : 'mr-[4px]'} ${it[0][0] === 'fox' ? 'ml-[3px]' : it[0][0] === 'star' ? 'ml-[2px]' : ''}">` + it.map(([k, t, on]) => `<button ${t ? '' : 'aria-label="Player"'} class="flex items-center gap-[3px] overflow-hidden rounded-xs border border-[#777c80] pl-[6px] whitespace-nowrap ${it.length > 2 ? 'w-[86px]' : 'w-[85px]'} ${on ? lit : fill}">${ic(k)}<span>${t}</span></button>`).join('') + '</div>').join('');
</script>
</body>
</html>
